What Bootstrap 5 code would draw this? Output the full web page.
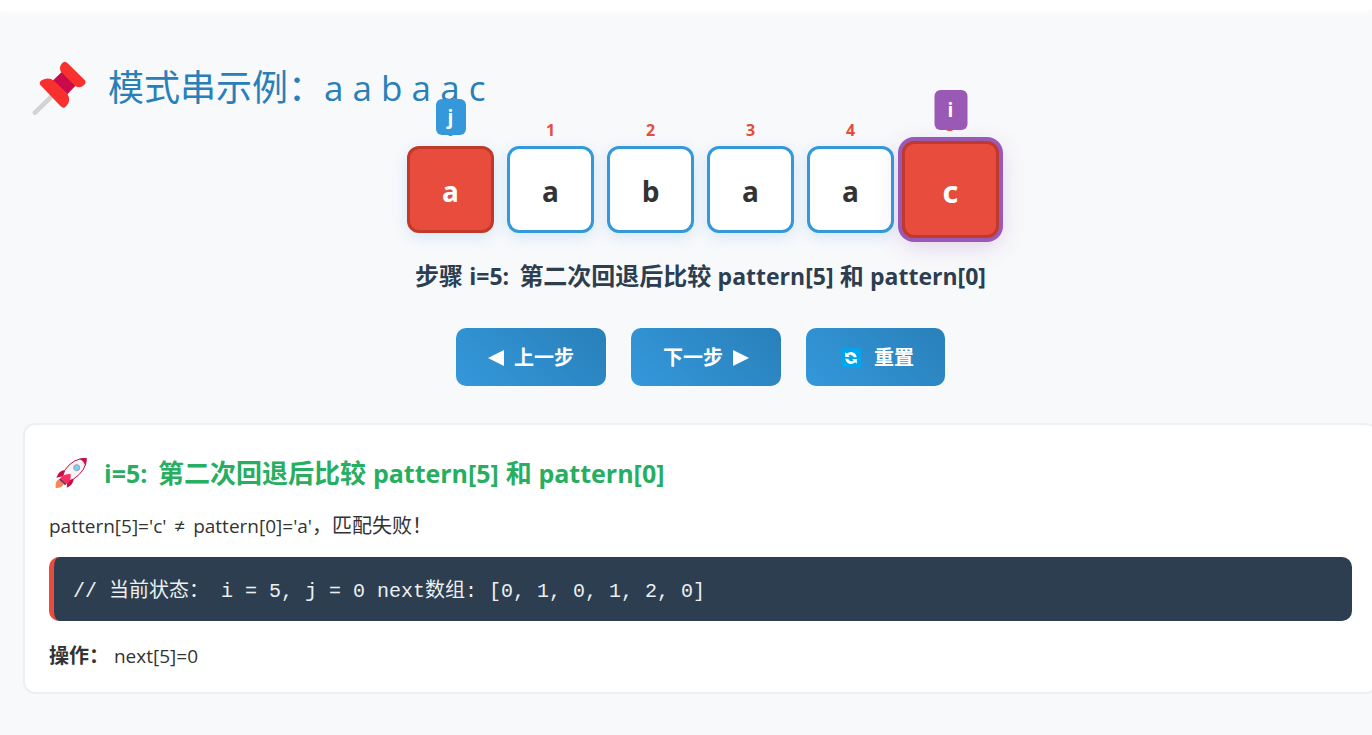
<!DOCTYPE html>
<html lang="zh-CN">
<head>
<meta charset="utf-8">
<meta name="viewport" content="width=device-width, initial-scale=1">
<title>KMP next 数组演示</title>
<link href="https://cdn.jsdelivr.net/npm/bootstrap@5.3.0/dist/css/bootstrap.min.css" rel="stylesheet">
<style>
  body { background: #f8f9fb; color: #333; font-family: "Open Sans", "Noto Sans CJK SC", sans-serif; font-size: 19px; line-height: 30px; overflow-x: hidden; }
  .top-strip { height: 10px; background: #fff; box-shadow: 0 2px 8px #fff; }
  .demo { padding-left: 23px; margin-right: -6px; padding-top: 48px; }
  .demo-title { color: #2980b9; font-size: 36px; line-height: 60px; font-weight: 400; padding-left: 9px; gap: 22px; margin-bottom: 28px; }
  .demo-title .lat { font-size: 35px; }
  .cells { gap: 13px; margin-bottom: 25px; }
  .cell { width: 87px; height: 87px; padding-top: 2px; border: 3px solid #3498db; border-radius: 12px; background: #fff; font-size: 28px; font-weight: 700; box-shadow: 0 4px 15px rgba(52,152,219,.18); }
  .cell-index { bottom: calc(100% + 8px); left: 0; right: 0; font-size: 16px; line-height: 22px; color: #e74c3c; }
  .cell-fail { background: #e74c3c; border-color: #c0392b; color: #fff; }
  .cell-current { width: 97px; height: 97px; margin: -5px; font-size: 31px; box-shadow: 0 0 0 4px #9b59b6, 0 6px 24px rgba(155,89,182,.3); }
  .pointer { bottom: calc(100% + 14px); left: 50%; transform: translateX(-50%); width: 30px; line-height: 36px; border-radius: 6px; font-size: 19px; color: #fff; background: #3498db; }
  .pointer-i { width: 33px; line-height: 40px; background: #9b59b6; }
  .step-text { font-size: 24px; line-height: 36px; font-weight: 700; color: #2c3e50; margin-bottom: 34px; }
  .controls { gap: 25px; margin-bottom: 37px; }
  .step-btn { height: 58px; padding: 2px 32px 0; border: 0; border-radius: 10px; font-size: 20px; font-weight: 700; color: #fff; background: linear-gradient(45deg, #3498db, #2980b9); gap: 10px; }
  .reset-btn { gap: 13px; padding: 2px 31px 0 35px; }
  .info-box { border: 2px solid #ecf0f1; border-radius: 12px; padding: 28px 24px 21px; }
  .info-title { color: #27ae60; font-size: 26px; line-height: 40px; font-weight: 700; gap: 17px; padding-left: 6px; margin-bottom: 18px; }
  .code-box { background: #2c3e50; color: #ecf0f1; border-left: 5px solid #e74c3c; border-radius: 10px; padding: 20px 20px 14px 19px; font: 20px/30px "Liberation Mono", "Noto Sans CJK SC", monospace; margin: 16px 0 20px; }
  .lat { font-size: 23px; }
  .lat-title { font-size: 25px; }
  .cjk { font-size: 20px; }
  .op { margin: 0 3px; }
</style>
</head>
<body>
<div class="top-strip"></div>
<main class="demo">
  <h2 class="demo-title d-flex align-items-center">
    <svg width="54" height="54" viewBox="96 181 162 162" aria-hidden="true">
      <path d="M105 336 155 287" stroke="#d3d3d3" stroke-width="14" stroke-linecap="round"/>
      <path d="M188 211 228 254 202 281 158 240Z" fill="#ca0b4a"/>
      <path d="M121 253Q116 245 125 239 145 227 162 240L202 279Q214 298 200 315 191 326 182 317Z" fill="#f8312f"/>
      <path d="M185 189Q194 178 203 188L254 238Q260 245 253 252 239 266 225 255L186 217Q174 203 185 189Z" fill="#f8312f"/>
    </svg>
    <span>模式串示例：<span class="lat">a a b a a c</span></span>
  </h2>

  <div class="cells d-flex justify-content-center">
    <div class="cell cell-fail position-relative d-flex align-items-center justify-content-center">a<span class="cell-index position-absolute text-center">0</span><span class="pointer position-absolute text-center">j</span></div>
    <div class="cell position-relative d-flex align-items-center justify-content-center">a<span class="cell-index position-absolute text-center">1</span></div>
    <div class="cell position-relative d-flex align-items-center justify-content-center">b<span class="cell-index position-absolute text-center">2</span></div>
    <div class="cell position-relative d-flex align-items-center justify-content-center">a<span class="cell-index position-absolute text-center">3</span></div>
    <div class="cell position-relative d-flex align-items-center justify-content-center">a<span class="cell-index position-absolute text-center">4</span></div>
    <div class="cell cell-fail cell-current position-relative d-flex align-items-center justify-content-center">c<span class="cell-index position-absolute text-center">5</span><span class="pointer pointer-i position-absolute text-center">i</span></div>
  </div>

  <div class="step-text text-center">步骤 <span class="lat me-1">i=5:</span> 第二次回退后比较 <span class="lat">pattern[5]</span> 和 <span class="lat">pattern[0]</span></div>

  <div class="controls d-flex justify-content-center">
    <button type="button" class="step-btn d-flex align-items-center">
      <svg width="16" height="16" viewBox="0 0 16 16" fill="#fff" aria-hidden="true"><path d="M0 8 16 0V16Z"/></svg>上一步
    </button>
    <button type="button" class="step-btn d-flex align-items-center">
      下一步<svg width="16" height="16" viewBox="0 0 16 16" fill="#fff" aria-hidden="true"><path d="M16 8 0 0V16Z"/></svg>
    </button>
    <button type="button" class="step-btn reset-btn d-flex align-items-center">
      <svg width="20" height="20" viewBox="0 0 20 20" aria-hidden="true">
        <rect width="20" height="20" rx="2" fill="#00a6ed"/>
        <path d="M4.2 4.3V9H9L7.3 7.4Q10.5 5.2 13 9.3H15.7Q14.8 4.2 10 4 7.5 4 5.8 5.8ZM15.8 15.7V11H11L12.7 12.6Q9.5 14.8 7 10.7H4.3Q5.2 15.8 10 16 12.5 16 14.2 14.2Z" fill="#fff"/>
      </svg>重置
    </button>
  </div>

  <section class="info-box bg-white">
    <h3 class="info-title d-flex align-items-center">
      <svg width="32" height="32" viewBox="134 141 96 96" aria-hidden="true">
        <path d="M147 207Q134 212 136 234 154 235 160 223Z" fill="#ff8257"/>
        <path d="M166 180Q145 181 138 203L157 199ZM190 205Q190 226 169 233L171 213Z" fill="#ca0b4a"/>
        <path d="M228 145Q188 144 163 181L157 199 172 214 190 207Q229 180 228 145Z" fill="#f4f4f4" stroke="#ca0b4a" stroke-width="3"/>
        <path d="M207 147Q218 144 228 145 229 156 225 167 219 151 207 147Z" fill="#ca0b4a"/>
        <path d="M149 206Q156 192 181 192 183 216 166 223Z" fill="#f92f60"/>
        <path d="M148 207 166 224" stroke="#533566" stroke-width="5"/>
        <circle cx="199" cy="173" r="9" fill="#83cbff" stroke="#9b9b9b" stroke-width="3"/>
      </svg>
      <span><span class="lat-title me-1">i=5:</span> 第二次回退后比较 <span class="lat-title">pattern[5]</span> 和 <span class="lat-title">pattern[0]</span></span>
    </h3>
    <p class="mb-0">pattern[5]='c' <span class="op">≠</span> pattern[0]='a'<span class="cjk">，匹配失败！</span></p>
    <div class="code-box">// 当前状态： i = 5, j = 0 next数组: [0, 1, 0, 1, 2, 0]</div>
    <p class="mb-0"><strong class="cjk">操作：</strong> next[5]=0</p>
  </section>
</main>
<script src="https://cdn.jsdelivr.net/npm/bootstrap@5.3.0/dist/js/bootstrap.bundle.min.js"></script>
</body>
</html>
